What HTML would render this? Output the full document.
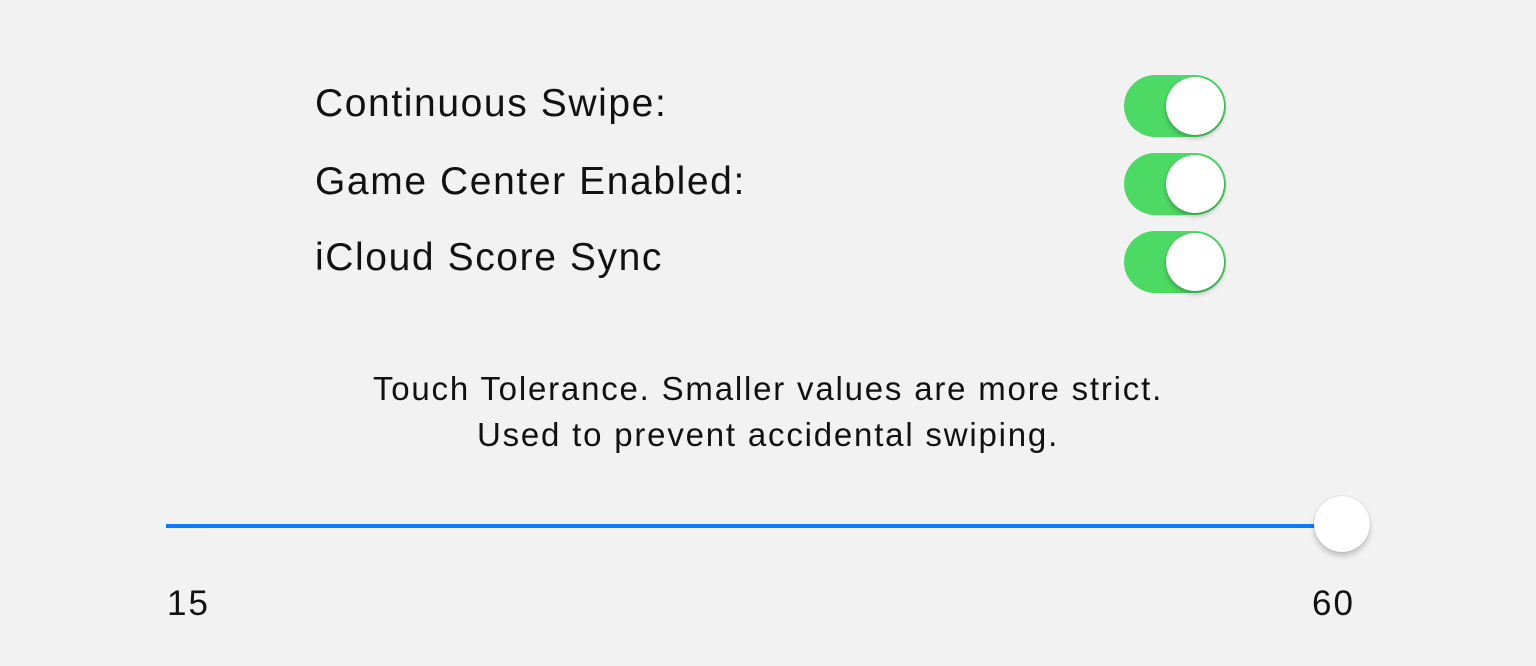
<!DOCTYPE html>
<html><head><style>
body{margin:0;width:1536px;height:666px;background:#f2f2f2;font-family:"Liberation Sans",sans-serif;color:#111;position:relative;overflow:hidden}
.l{position:absolute;left:315px;font-size:39px;line-height:1;white-space:nowrap;letter-spacing:1.6px}
.sw{position:absolute;left:1124px;width:102px;height:62px;border-radius:31px;background:#4cd964}
.sw::after{content:"";position:absolute;right:2px;top:2px;width:58px;height:58px;border-radius:50%;background:#fff;box-shadow:0 3px 5px rgba(0,0,0,.25),0 0 1px rgba(0,0,0,.2)}
.c{position:absolute;left:0;width:1536px;text-align:center;font-size:33px;line-height:46px;letter-spacing:1.8px}
.n{position:absolute;font-size:35px;line-height:1;letter-spacing:2px}
</style></head><body>
<div class="l" style="top:84px">Continuous Swipe:</div>
<div class="l" style="top:162px">Game Center Enabled:</div>
<div class="l" style="top:238px">iCloud Score Sync</div>
<div class="sw" style="top:75px"></div>
<div class="sw" style="top:153px"></div>
<div class="sw" style="top:231px"></div>
<div class="c" style="top:366px">Touch Tolerance. Smaller values are more strict.<br>Used to prevent accidental swiping.</div>
<div style="position:absolute;left:166px;top:524px;width:1160px;height:4px;background:#0a7aff"></div>
<div style="position:absolute;left:1314px;top:496px;width:56px;height:56px;border-radius:50%;background:#fff;box-shadow:0 4px 6px rgba(0,0,0,.2),0 0 1px rgba(0,0,0,.3)"></div>
<div class="n" style="left:167px;top:586px">15</div>
<div class="n" style="left:1312px;top:586px">60</div>
</body></html>
